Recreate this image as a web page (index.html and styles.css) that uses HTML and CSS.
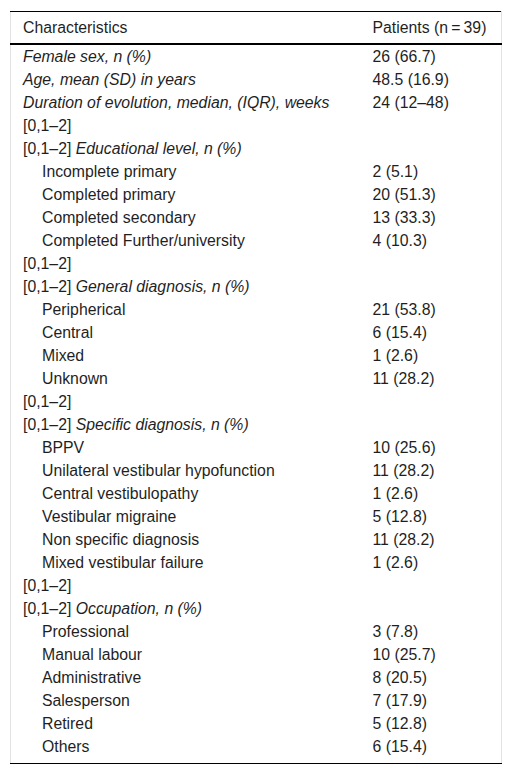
FILE: index.html
```html
<!DOCTYPE html>
<html>
<head>
<meta charset="utf-8">
<link rel="stylesheet" href="styles.css">
</head>
<body>
<div class="wrap">
<table class="tbl">
<colgroup><col class="c1"><col class="c2"></colgroup>
<thead>
<tr><th>Characteristics</th><th>Patients (n&#8201;=&#8201;39)</th></tr>
</thead>
<tbody>
<tr><td><i>Female sex, n (%)</i></td><td>26 (66.7)</td></tr>
<tr><td><i>Age, mean (SD) in years</i></td><td>48.5 (16.9)</td></tr>
<tr><td><i>Duration of evolution, median, (IQR), weeks</i></td><td>24 (12–48)</td></tr>
<tr><td>[0,1–2]</td><td></td></tr>
<tr><td>[0,1–2] <i>Educational level, n (%)</i></td><td></td></tr>
<tr><td class="ind">Incomplete primary</td><td>2 (5.1)</td></tr>
<tr><td class="ind">Completed primary</td><td>20 (51.3)</td></tr>
<tr><td class="ind">Completed secondary</td><td>13 (33.3)</td></tr>
<tr><td class="ind">Completed Further/university</td><td>4 (10.3)</td></tr>
<tr><td>[0,1–2]</td><td></td></tr>
<tr><td>[0,1–2] <i>General diagnosis, n (%)</i></td><td></td></tr>
<tr><td class="ind">Peripherical</td><td>21 (53.8)</td></tr>
<tr><td class="ind">Central</td><td>6 (15.4)</td></tr>
<tr><td class="ind">Mixed</td><td>1 (2.6)</td></tr>
<tr><td class="ind">Unknown</td><td>11 (28.2)</td></tr>
<tr><td>[0,1–2]</td><td></td></tr>
<tr><td>[0,1–2] <i>Specific diagnosis, n (%)</i></td><td></td></tr>
<tr><td class="ind">BPPV</td><td>10 (25.6)</td></tr>
<tr><td class="ind">Unilateral vestibular hypofunction</td><td>11 (28.2)</td></tr>
<tr><td class="ind">Central vestibulopathy</td><td>1 (2.6)</td></tr>
<tr><td class="ind">Vestibular migraine</td><td>5 (12.8)</td></tr>
<tr><td class="ind">Non specific diagnosis</td><td>11 (28.2)</td></tr>
<tr><td class="ind">Mixed vestibular failure</td><td>1 (2.6)</td></tr>
<tr><td>[0,1–2]</td><td></td></tr>
<tr><td>[0,1–2] <i>Occupation, n (%)</i></td><td></td></tr>
<tr><td class="ind">Professional</td><td>3 (7.8)</td></tr>
<tr><td class="ind">Manual labour</td><td>10 (25.7)</td></tr>
<tr><td class="ind">Administrative</td><td>8 (20.5)</td></tr>
<tr><td class="ind">Salesperson</td><td>7 (17.9)</td></tr>
<tr><td class="ind">Retired</td><td>5 (12.8)</td></tr>
<tr class="last"><td class="ind">Others</td><td>6 (15.4)</td></tr>
</tbody>
</table>
</div>
</body>
</html>
```
FILE: styles.css
```css
body {
  margin: 0;
  font-family: "Liberation Sans", Arial, sans-serif;
  font-size: 15.8px;
  color: #1f1f1f;
  background: #fff;
}
.wrap {
  padding: 11px 10px 0 10px;
}
.tbl {
  border-collapse: collapse;
  width: 492px;
  table-layout: fixed;
  border-top: 1px solid #000;
  border-bottom: 1px solid #000;
  border-left: 1px solid #e2e2e2;
  border-right: 1px solid #e2e2e2;
}
.c1 { width: 350px; }
.tbl th {
  font-weight: normal;
  text-align: left;
  height: 31px;
  padding: 0 12px;
  border-bottom: 2px solid #000;
  white-space: nowrap;
}
.tbl td {
  height: 23px;
  line-height: 23px;
  padding: 0 12px;
  white-space: nowrap;
}
.tbl td.ind {
  padding-left: 31px;
}
.tbl tr.last td {
  padding-bottom: 5px;
}
```
